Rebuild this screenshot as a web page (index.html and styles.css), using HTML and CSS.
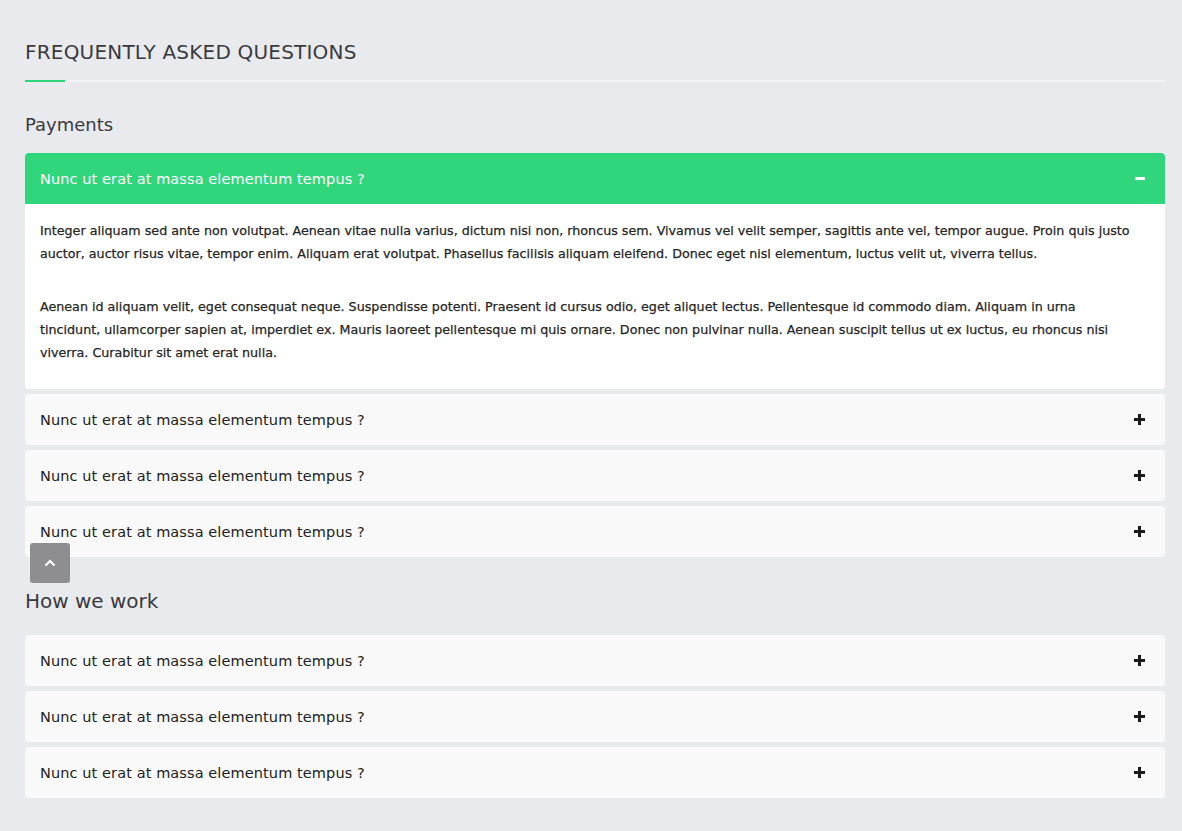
FILE: index.html
```html
<!DOCTYPE html>
<html lang="en">
<head>
<meta charset="utf-8">
<title>FAQ</title>
<link rel="stylesheet" href="styles.css">
</head>
<body>
<main class="faq">
  <h1 class="faq-title">FREQUENTLY ASKED QUESTIONS</h1>
  <div class="title-rule"><span class="rule-accent"></span></div>

  <section class="faq-group">
    <h2 class="group-title group-title-sm">Payments</h2>
    <div class="item open">
      <div class="item-head">
        <span class="item-q">Nunc ut erat at massa elementum tempus ?</span>
        <span class="icon-minus"></span>
      </div>
      <div class="item-body">
        <p>Integer aliquam sed ante non volutpat. Aenean vitae nulla varius, dictum nisi non, rhoncus sem. Vivamus vel velit semper, sagittis ante vel, tempor augue. Proin quis justo<br>auctor, auctor risus vitae, tempor enim. Aliquam erat volutpat. Phasellus facilisis aliquam eleifend. Donec eget nisl elementum, luctus velit ut, viverra tellus.</p>
        <p>Aenean id aliquam velit, eget consequat neque. Suspendisse potenti. Praesent id cursus odio, eget aliquet lectus. Pellentesque id commodo diam. Aliquam in urna<br>tincidunt, ullamcorper sapien at, imperdiet ex. Mauris laoreet pellentesque mi quis ornare. Donec non pulvinar nulla. Aenean suscipit tellus ut ex luctus, eu rhoncus nisi<br>viverra. Curabitur sit amet erat nulla.</p>
      </div>
    </div>
    <div class="item">
      <div class="item-head"><span class="item-q">Nunc ut erat at massa elementum tempus ?</span><span class="icon-plus"></span></div>
    </div>
    <div class="item">
      <div class="item-head"><span class="item-q">Nunc ut erat at massa elementum tempus ?</span><span class="icon-plus"></span></div>
    </div>
    <div class="item">
      <div class="item-head"><span class="item-q">Nunc ut erat at massa elementum tempus ?</span><span class="icon-plus"></span></div>
    </div>
  </section>

  <section class="faq-group">
    <h2 class="group-title group-title-lg">How we work</h2>
    <div class="item">
      <div class="item-head"><span class="item-q">Nunc ut erat at massa elementum tempus ?</span><span class="icon-plus"></span></div>
    </div>
    <div class="item">
      <div class="item-head"><span class="item-q">Nunc ut erat at massa elementum tempus ?</span><span class="icon-plus"></span></div>
    </div>
    <div class="item">
      <div class="item-head"><span class="item-q">Nunc ut erat at massa elementum tempus ?</span><span class="icon-plus"></span></div>
    </div>
  </section>
</main>

<a class="back-top" href="#" aria-label="Back to top">
  <svg width="14" height="10" viewBox="0 0 14 10"><path d="M2.5 7.5 L7 3 L11.5 7.5" fill="none" stroke="#fff" stroke-width="2.2"/></svg>
</a>
</body>
</html>
```

FILE: styles.css
```css
* { box-sizing: border-box; }

html, body {
  margin: 0;
  padding: 0;
  background: #e9eaee;
}

body {
  font-family: "DejaVu Sans", "Noto Sans", sans-serif;
  color: #333;
}

.faq {
  width: 1140px;
  margin-left: 25px;
  padding-top: 38px;
  padding-bottom: 33px;
}

.faq-title {
  margin: 0;
  font-size: 20px;
  font-weight: normal;
  line-height: 28px;
  color: #3a3a3e;
  letter-spacing: 0.2px;
}

.title-rule {
  margin-top: 14px;
  height: 2px;
  background: #f2f3f5;
  display: flex;
}

.rule-accent {
  width: 40px;
  height: 2px;
  background: #31d67c;
}

.group-title {
  margin: 0;
  font-weight: normal;
  color: #3a3a3e;
}

.group-title-sm {
  font-size: 18px;
  line-height: 26px;
  margin-top: 30px;
  margin-bottom: 15px;
}

.group-title-lg {
  font-size: 20px;
  line-height: 26px;
  margin-top: 31px;
  margin-bottom: 21px;
}

.item {
  border-radius: 4px;
  background: #f9f9f9;
  margin-bottom: 5px;
  overflow: hidden;
}

.item-head {
  height: 51px;
  display: flex;
  align-items: center;
  justify-content: space-between;
  padding: 0 20px 0 15px;
}

.item-q {
  font-size: 14.5px;
  color: #222;
  letter-spacing: 0.1px;
}

.item.open .item-head {
  background: #31d67c;
}

.item.open .item-q {
  color: #fff;
}

.item-body {
  background: #fff;
  padding: 15px 15px 15px 15px;
}

.item-body p {
  margin: 0 0 30px;
  font-size: 12.7px;
  line-height: 23px;
  color: #262626;
  -webkit-text-stroke: 0.25px #262626;
}

.item-body p:last-child {
  margin-bottom: 10px;
}

.icon-plus {
  position: relative;
  width: 11px;
  height: 11px;
}

.icon-plus::before,
.icon-plus::after {
  content: "";
  position: absolute;
  background: #1a1a1a;
}

.icon-plus::before {
  left: 0;
  top: 4px;
  width: 11px;
  height: 3px;
}

.icon-plus::after {
  left: 4px;
  top: 0;
  width: 3px;
  height: 11px;
}

.icon-minus {
  width: 10px;
  height: 3px;
  background: #fff;
}

.back-top {
  position: fixed;
  left: 30px;
  top: 543px;
  width: 40px;
  height: 40px;
  border-radius: 3px;
  background: #8e8e90;
  display: flex;
  align-items: center;
  justify-content: center;
}
```
